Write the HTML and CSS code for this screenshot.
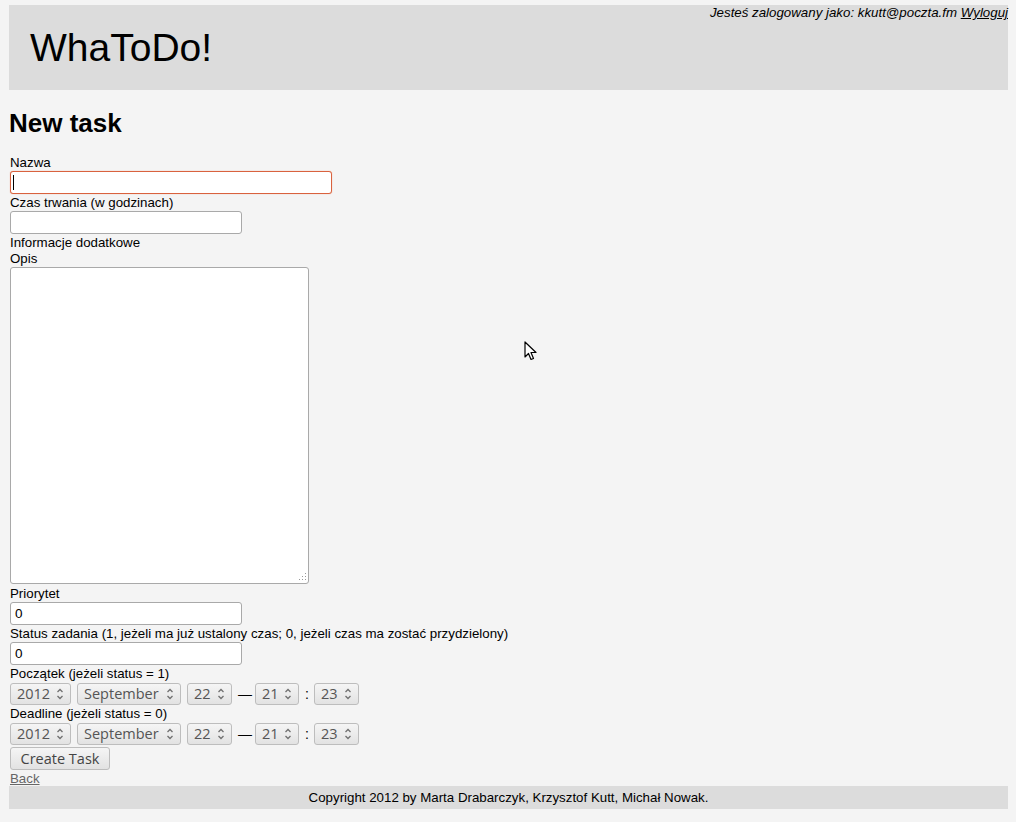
FILE: index.html
```html
<!DOCTYPE html>
<html lang="pl">
<head>
<meta charset="utf-8">
<title>WhaToDo!</title>
<link rel="stylesheet" href="styles.css">
</head>
<body>
<div class="page">
  <header class="header">
    <div class="userbar"><i>Jesteś zalogowany jako: kkutt@poczta.fm</i> <a href="#" class="logout">Wyloguj</a></div>
    <div class="logo">WhaToDo!</div>
  </header>
  <h1 class="title">New task</h1>
  <form class="form">
    <div class="label">Nazwa</div>
    <div class="field focused w-wide"><span class="caret"></span></div>
    <div class="label">Czas trwania (w godzinach)</div>
    <div class="field w-mid"></div>
    <div class="label">Informacje dodatkowe</div>
    <div class="label">Opis</div>
    <div class="textarea"><svg class="grip" width="9" height="9" viewBox="0 0 9 9"><g fill="#999"><rect x="7" y="0" width="1" height="1"/><rect x="7" y="3" width="1" height="1"/><rect x="4" y="3" width="1" height="1"/><rect x="7" y="6" width="1" height="1"/><rect x="4" y="6" width="1" height="1"/><rect x="1" y="6" width="1" height="1"/></g></svg></div>
    <div class="label">Priorytet</div>
    <div class="field w-mid"><span class="val">0</span></div>
    <div class="label">Status zadania (1, jeżeli ma już ustalony czas; 0, jeżeli czas ma zostać przydzielony)</div>
    <div class="field w-mid"><span class="val">0</span></div>
    <div class="label">Początek (jeżeli status = 1)</div>
    <div class="selrow">
      <div class="sel s-year"><span>2012</span><svg class="arr" width="8" height="14" viewBox="0 0 8 14"><path d="M1.5 5 L4 2.5 L6.5 5 M1.5 9 L4 11.5 L6.5 9" fill="none" stroke="#707070" stroke-width="1.3"/></svg></div>
      <div class="sel s-month"><span>September</span><svg class="arr" width="8" height="14" viewBox="0 0 8 14"><path d="M1.5 5 L4 2.5 L6.5 5 M1.5 9 L4 11.5 L6.5 9" fill="none" stroke="#707070" stroke-width="1.3"/></svg></div>
      <div class="sel s-num"><span>22</span><svg class="arr" width="8" height="14" viewBox="0 0 8 14"><path d="M1.5 5 L4 2.5 L6.5 5 M1.5 9 L4 11.5 L6.5 9" fill="none" stroke="#707070" stroke-width="1.3"/></svg></div>
      <span class="sep dash">—</span>
      <div class="sel s-hour"><span>21</span><svg class="arr" width="8" height="14" viewBox="0 0 8 14"><path d="M1.5 5 L4 2.5 L6.5 5 M1.5 9 L4 11.5 L6.5 9" fill="none" stroke="#707070" stroke-width="1.3"/></svg></div>
      <span class="sep colon">:</span>
      <div class="sel s-num"><span>23</span><svg class="arr" width="8" height="14" viewBox="0 0 8 14"><path d="M1.5 5 L4 2.5 L6.5 5 M1.5 9 L4 11.5 L6.5 9" fill="none" stroke="#707070" stroke-width="1.3"/></svg></div>
    </div>
    <div class="label">Deadline (jeżeli status = 0)</div>
    <div class="selrow">
      <div class="sel s-year"><span>2012</span><svg class="arr" width="8" height="14" viewBox="0 0 8 14"><path d="M1.5 5 L4 2.5 L6.5 5 M1.5 9 L4 11.5 L6.5 9" fill="none" stroke="#707070" stroke-width="1.3"/></svg></div>
      <div class="sel s-month"><span>September</span><svg class="arr" width="8" height="14" viewBox="0 0 8 14"><path d="M1.5 5 L4 2.5 L6.5 5 M1.5 9 L4 11.5 L6.5 9" fill="none" stroke="#707070" stroke-width="1.3"/></svg></div>
      <div class="sel s-num"><span>22</span><svg class="arr" width="8" height="14" viewBox="0 0 8 14"><path d="M1.5 5 L4 2.5 L6.5 5 M1.5 9 L4 11.5 L6.5 9" fill="none" stroke="#707070" stroke-width="1.3"/></svg></div>
      <span class="sep dash">—</span>
      <div class="sel s-hour"><span>21</span><svg class="arr" width="8" height="14" viewBox="0 0 8 14"><path d="M1.5 5 L4 2.5 L6.5 5 M1.5 9 L4 11.5 L6.5 9" fill="none" stroke="#707070" stroke-width="1.3"/></svg></div>
      <span class="sep colon">:</span>
      <div class="sel s-num"><span>23</span><svg class="arr" width="8" height="14" viewBox="0 0 8 14"><path d="M1.5 5 L4 2.5 L6.5 5 M1.5 9 L4 11.5 L6.5 9" fill="none" stroke="#707070" stroke-width="1.3"/></svg></div>
    </div>
    <div class="btnrow"><span class="btn">Create Task</span></div>
    <div class="backrow"><a href="#" class="back">Back</a></div>
  </form>
  <footer class="footer">Copyright 2012 by Marta Drabarczyk, Krzysztof Kutt, Michał Nowak.</footer>
</div>
<svg class="cursor" width="14" height="22" viewBox="0 0 14 22"><path d="M1 1 L1 16 L4.5 12.5 L7 18.5 L9.5 17.5 L7 11.5 L12 11.5 Z" fill="#fff" stroke="#000" stroke-width="1.2" stroke-linejoin="round"/></svg>
</body>
</html>
```
FILE: styles.css
```css
html, body {
  margin: 0;
  padding: 0;
  background: #f4f4f4;
}
body {
  font-family: "Liberation Sans", Arial, sans-serif;
  font-size: 13.3px;
  color: #000;
  padding: 5px 8px 0 9px;
}
.page {
  width: 999px;
}
.header {
  background: #dcdcdc;
  height: 85px;
  position: relative;
}
.userbar {
  position: absolute;
  right: 0;
  top: 0;
  line-height: 15px;
}
.logout {
  color: #000;
  font-style: italic;
  text-decoration: underline;
}
.logo {
  font-size: 39px;
  line-height: 46px;
  padding: 20px 0 0 21px;
}
.title {
  font-size: 26px;
  font-weight: bold;
  margin: 0;
  padding: 18px 0 0 0;
  line-height: 30px;
  height: 46px;
}
.form {
  padding-left: 1px;
}
.label {
  padding-top: 2px;
  line-height: 14px;
  height: 14px;
  white-space: nowrap;
}
.field {
  box-sizing: border-box;
  height: 23px;
  margin-top: 1px;
  border: 1px solid #a9a9a9;
  border-radius: 3px;
  background: #fff;
  position: relative;
  line-height: 21px;
  padding-left: 4px;
}
.w-wide { width: 322px; }
.w-mid { width: 232px; }
.focused {
  border-color: #d9623e;
  box-shadow: 0 0 1px #e6906f;
}
.caret {
  position: absolute;
  left: 2px;
  top: 3px;
  width: 1px;
  height: 15px;
  background: #000;
}
.val {
  font-size: 13.5px;
}
.textarea {
  box-sizing: border-box;
  width: 299px;
  height: 317px;
  margin-top: 1px;
  margin-bottom: 1px;
  border: 1px solid #a9a9a9;
  border-radius: 3px;
  background: #fff;
  position: relative;
}
.grip {
  position: absolute;
  right: 1px;
  bottom: 1px;
}
.selrow {
  display: flex;
  align-items: center;
  height: 22px;
  margin-top: 2px;
}
.sel {
  box-sizing: border-box;
  height: 22px;
  border: 1px solid #bdbdbd;
  border-radius: 3px;
  background: linear-gradient(#f5f5f5, #e2e2e2);
  display: flex;
  align-items: center;
  justify-content: space-between;
  padding: 0 6px 0 6px;
  font-family: "Open Sans", "DejaVu Sans", sans-serif;
  font-size: 14.5px;
  color: #555;
  margin-right: 6px;
}
.sel span {
  line-height: 20px;
}
.arr {
  flex: none;
}
.s-year { width: 61px; }
.s-month { width: 104px; }
.s-num { width: 45px; }
.s-hour { width: 44px; }
.sep {
  font-size: 14px;
  color: #000;
  margin-right: 6px;
}
.dash { width: 11px; }
.colon { width: 3px; margin-right: 6px; }
.btnrow {
  margin-top: 2px;
  height: 23px;
}
.btn {
  box-sizing: border-box;
  display: inline-flex;
  align-items: center;
  justify-content: center;
  width: 100px;
  height: 23px;
  border: 1px solid #bdbdbd;
  border-radius: 3px;
  background: linear-gradient(#f5f5f5, #e2e2e2);
  font-family: "Open Sans", "DejaVu Sans", sans-serif;
  font-size: 14.5px;
  color: #444;
}
.backrow {
  padding-top: 2px;
  line-height: 14px;
  height: 14px;
}
.back {
  color: #666;
  text-decoration: underline;
}
.footer {
  background: #dcdcdc;
  height: 23px;
  line-height: 23px;
  text-align: center;
}
.cursor {
  position: absolute;
  left: 524px;
  top: 341px;
}
```
